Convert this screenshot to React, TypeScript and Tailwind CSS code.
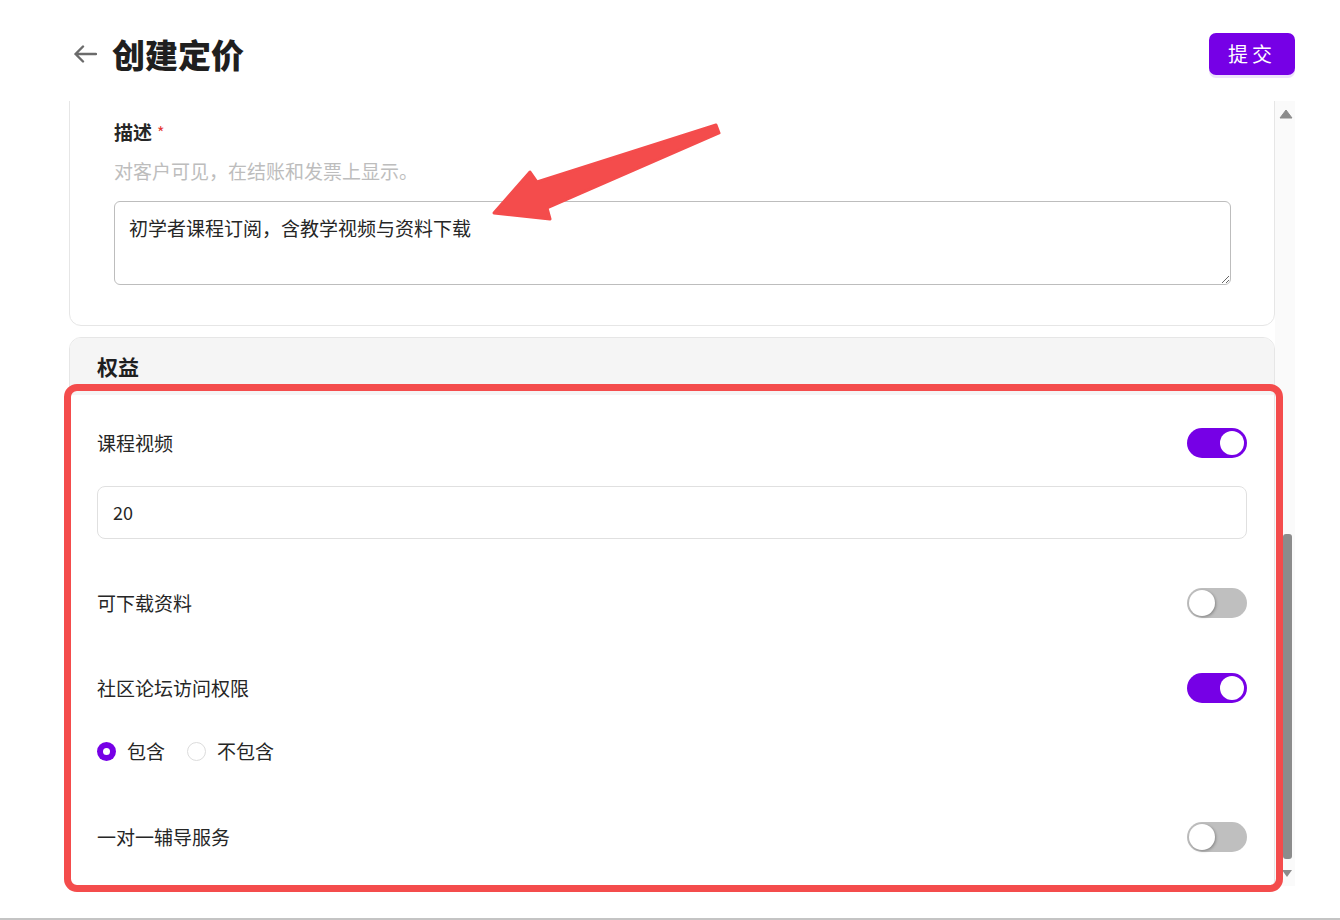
import React from "react";

const font = { fontFamily: '"Noto Sans CJK SC", "Noto Sans", sans-serif' };

function Toggle({ on }: { on: boolean }) {
  return on ? (
    <div className="w-[60px] h-[30px] rounded-full bg-[#7600e6] flex items-center justify-end pr-[3px]">
      <div className="w-[24px] h-[24px] rounded-full bg-white" />
    </div>
  ) : (
    <div className="w-[60px] h-[30px] rounded-full bg-[#bfbfbf] flex items-center pl-[2px]">
      <div className="w-[26px] h-[26px] rounded-full bg-white shadow-[1px_1px_3px_rgba(0,0,0,0.3)]" />
    </div>
  );
}

function Row({ label, on, className }: { label: string; on: boolean; className: string }) {
  return (
    <div className={"flex items-center justify-between h-[30px] " + className}>
      <span className="text-[19px] text-[#262626]">{label}</span>
      <Toggle on={on} />
    </div>
  );
}

export default function App() {
  return (
    <div className="w-[1340px] h-[920px] bg-white relative overflow-hidden flex flex-col" style={font}>
      {/* header */}
      <div className="h-[101px] shrink-0 pl-[73px] pr-[45px]">
        <div className="mt-[32px] h-[44px] flex items-center justify-between">
          <div className="flex items-center">
            <svg width="24" height="18" viewBox="0 0 24 18" className="mr-[15px]">
              <path d="M23 9H2.5M10 1.5 2.5 9l7.5 7.5" fill="none" stroke="#6b6b6b" strokeWidth="2.4" strokeLinecap="round" strokeLinejoin="round" />
            </svg>
            <h1 className="text-[33px] font-black text-[#1f1f1f] leading-none">创建定价</h1>
          </div>
          <button className="w-[86px] h-[42px] rounded-[7px] bg-[#7600e6] text-white text-[20px] tracking-[4px] shadow-[0_3px_0_rgba(118,0,230,0.12)]">
            提交
          </button>
        </div>
      </div>

      {/* scroll area */}
      <div className="h-[785px] flex pl-[69px]">
        <div className="w-[1206px] overflow-hidden">
          {/* description card */}
          <div className="-mt-[40px] border border-[#e6e6e6] rounded-[12px] px-[44px] pt-[56px] pb-[40px]">
            <div className="h-[28px] flex items-center text-[19px] font-bold text-[#262626]">
              描述<span className="text-[#e53935] font-normal text-[16px] ml-[5px]">*</span>
            </div>
            <div className="mt-[11px] h-[28px] flex items-center text-[19px] text-[#bdbdbd]">
              对客户可见，在结账和发票上显示。
            </div>
            <textarea
              readOnly
              defaultValue="初学者课程订阅，含教学视频与资料下载"
              className="mt-[16px] block w-[1117px] h-[84px] border border-[#bdbdbd] rounded-[6px] px-[14px] pt-[12px] text-[19px] leading-[28px] text-[#262626] outline-none"
              style={font}
            />
          </div>

          {/* benefits card */}
          <div className="mt-[11px] border border-[#e6e6e6] rounded-[12px] overflow-hidden">
            <div className="h-[57px] bg-[#f5f5f5] pl-[27px] flex items-center">
              <span className="text-[21px] font-bold text-[#1f1f1f]">权益</span>
            </div>
            <div className="px-[27px] pt-[33px] pb-[40px]">
              <Row label="课程视频" on className="" />
              <div className="mt-[28px] h-[53px] border border-[#e0e0e0] rounded-[8px] pl-[15px] flex items-center text-[18px] text-[#262626]">
                20
              </div>
              <Row label="可下载资料" on={false} className="mt-[49px]" />
              <Row label="社区论坛访问权限" on className="mt-[55px]" />
              <div className="mt-[38px] h-[20px] flex items-center text-[19px] text-[#262626]">
                <div className="w-[19px] h-[19px] rounded-full bg-[#7600e6] flex items-center justify-center">
                  <div className="w-[7px] h-[7px] rounded-full bg-white" />
                </div>
                <span className="ml-[11px]">包含</span>
                <div className="ml-[22px] w-[19px] h-[19px] rounded-full border border-[#dcdcdc]" />
                <span className="ml-[11px]">不包含</span>
              </div>
              <Row label="一对一辅导服务" on={false} className="mt-[61px]" />
            </div>
          </div>
        </div>

        {/* scrollbar */}
        <div className="w-[20px] bg-[#fafafa] flex flex-col items-center">
          <svg width="14" height="10" viewBox="0 0 14 10" className="mt-[8px] ml-[2px]">
            <path d="M7 1 13 9H1Z" fill="#8c8c8c" stroke="#8c8c8c" strokeLinejoin="round" />
          </svg>
          <div className="mt-[415px] w-[9px] h-[325px] rounded-[3px] bg-[#8c8c8c] ml-[4px]" />
          <svg width="12" height="9" viewBox="0 0 12 9" className="mt-[10px] ml-[4px]">
            <path d="M1 1H11L6 8Z" fill="#8c8c8c" />
          </svg>
        </div>
      </div>

      <div className="mt-auto h-[2px] bg-[#c4c4c4]" />

      {/* annotations */}
      <div className="absolute left-[64px] top-[384px] w-[1219px] h-[508px] border-[7px] border-[#f44c4c] rounded-[13px]" />
      <svg className="absolute left-0 top-0" width="1340" height="920" viewBox="0 0 1340 920" style={{ pointerEvents: "none" }}>
        <polygon
          points="716,125 719,133 547,208 550,219 494,213 530,172 537,182"
          fill="#f44c4c"
          stroke="#f44c4c"
          strokeWidth="3"
          strokeLinejoin="round"
        />
      </svg>
    </div>
  );
}
